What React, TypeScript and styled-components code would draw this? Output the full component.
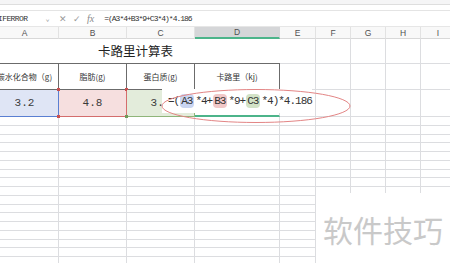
import React from 'react';
import styled, { createGlobalStyle } from 'styled-components';

const GlobalStyle = createGlobalStyle`
  html, body {
    margin: 0;
    padding: 0;
    background: #ffffff;
    overflow: hidden;
  }
  body {
    width: 450px;
    height: 263px;
    font-family: 'Liberation Sans', Arial, sans-serif;
  }
`;

const GRID = '#dcdde0';
const DARK = '#6b6b6b';

const Page = styled.div`
  position: relative;
  width: 450px;
  height: 263px;
  overflow: hidden;
  background: #fff;
`;

const Toolbar = styled.div`
  height: 4px;
  background: #f5f5f6;
  border-bottom: 1px solid #dedede;
`;

const ToolbarGap = styled.div`
  height: 5px;
  border-bottom: 1px solid #e4e4e4;
`;

const FormulaBar = styled.div`
  display: flex;
  align-items: center;
  height: 15px;
  border-bottom: 1px solid #e6e6e6;
`;

const NameBox = styled.div`
  display: flex;
  align-items: center;
  justify-content: space-between;
  width: 56px;
  height: 100%;
  padding: 0 5px 0 0;
  margin-left: -2px;
  box-sizing: border-box;
  font-family: 'Liberation Mono', monospace;
  font-size: 8px;
  letter-spacing: -0.6px;
  color: #333;
`;

const Caret = styled.span`
  font-size: 7px;
  color: #999;
`;

const BarIcons = styled.div`
  display: flex;
  align-items: center;
  gap: 6px;
  padding: 0 6px 0 5px;
  color: #9a9a9a;
  font-size: 9px;
`;

const Fx = styled.span`
  font-family: 'Liberation Serif', serif;
  font-style: italic;
  font-size: 10px;
  color: #8a8a8a;
`;

const FormulaInput = styled.div`
  flex: 1;
  padding-left: 4px;
  font-family: 'Liberation Mono', monospace;
  font-size: 8px;
  letter-spacing: -1px;
  color: #333;
  white-space: nowrap;
`;

const Sheet = styled.div`
  display: grid;
  margin-left: -9px;
  grid-template-columns: 68px 68px 68px 85px 36px 35px 35px 35px 35px;
  grid-template-rows: 12px 25px 26px 27px repeat(17, 8.75px);
`;

const ColHead = styled.div<{ $active?: boolean }>`
  display: flex;
  align-items: center;
  justify-content: center;
  box-sizing: border-box;
  font-size: 8.5px;
  color: #505050;
  background: ${(p) => (p.$active ? '#d5d6d8' : '#f8f8f8')};
  border-right: 1px solid ${(p) => (p.$active ? '#d5d6d8' : '#e2e2e2')};
  border-bottom: ${(p) => (p.$active ? '2px solid #4cb48a' : '1px solid #d8d8d8')};
`;

const Cell = styled.div`
  box-sizing: border-box;
  border-right: 1px solid ${GRID};
  border-bottom: 1px solid ${GRID};
`;

const TitleCell = styled.div`
  grid-column: span 4;
  display: flex;
  align-items: center;
  justify-content: center;
  padding-bottom: 1px;
  box-sizing: border-box;
  border-bottom: 1px solid ${DARK};
  font-family: 'Noto Sans CJK SC', sans-serif;
  font-size: 12.5px;
  color: #222;
`;

const LabelCell = styled.div`
  display: flex;
  align-items: center;
  justify-content: center;
  box-sizing: border-box;
  border-right: 1px solid ${DARK};
  border-bottom: 1px solid ${DARK};
  font-family: 'Noto Sans CJK SC', sans-serif;
  font-size: 8px;
  color: #333;
  white-space: nowrap;
`;

const RefCell = styled.div<{ $bg: string; $line: string }>`
  position: relative;
  display: flex;
  align-items: center;
  justify-content: center;
  box-sizing: border-box;
  background: ${(p) => p.$bg};
  border-right: 1px solid ${(p) => p.$line};
  border-bottom: 1px solid ${(p) => p.$line};
  font-family: 'Liberation Mono', monospace;
  font-size: 11px;
  letter-spacing: 0px;
  color: #3a3a3a;
`;

const Corner = styled.span<{ $color: string; $pos: 'tl' | 'tr' | 'bl' | 'br' }>`
  position: absolute;
  width: 3px;
  height: 3px;
  background: ${(p) => p.$color};
  ${(p) => (p.$pos[0] === 't' ? 'top: -2px;' : 'bottom: -2px;')}
  ${(p) => (p.$pos[1] === 'l' ? 'left: -2px;' : 'right: -2px;')}
`;

const ActiveCell = styled.div`
  box-sizing: border-box;
  border-right: 1px solid ${GRID};
  border-bottom: 2px solid #4cb48a;
`;

const Editor = styled.div`
  position: absolute;
  left: 162px;
  top: 89px;
  width: 150px;
  height: 24px;
  display: flex;
  align-items: center;
  padding-left: 6px;
  box-sizing: border-box;
  background: #fff;
  font-family: 'Liberation Mono', monospace;
  font-size: 11px;
  letter-spacing: -1px;
  color: #333;
  white-space: pre;
`;

const Ref = styled.span<{ $bg: string }>`
  background: ${(p) => p.$bg};
  border-radius: 4px;
  padding: 1px 2px 1px 1px;
  margin: 0 1px;
`;

const Ellipse = styled.svg`
  position: absolute;
  left: 160px;
  top: 88px;
`;

const Watermark = styled.div`
  position: absolute;
  left: 316px;
  top: 193px;
  width: 134px;
  height: 70px;
  display: flex;
  align-items: center;
  justify-content: center;
  padding-top: 2px;
  box-sizing: border-box;
  background: #fff;
  font-family: 'Noto Sans CJK SC', sans-serif;
  font-size: 30px;
  color: #c9c9c9;
`;

const columns = ['A', 'B', 'C', 'D', 'E', 'F', 'G', 'H', 'I'];

export default function App() {
  const bottomRows = Array.from({ length: 17 });

  return (
    <>
      <GlobalStyle />
      <Page>
        <Toolbar />
        <ToolbarGap />
        <FormulaBar>
          <NameBox>
            <span>IFERROR</span>
            <Caret>⌄</Caret>
          </NameBox>
          <BarIcons>
            <span>✕</span>
            <span>✓</span>
            <Fx>fx</Fx>
          </BarIcons>
          <FormulaInput>=(A3*4+B3*9+C3*4)*4.186</FormulaInput>
        </FormulaBar>

        <Sheet>
          {columns.map((c) => (
            <ColHead key={c} $active={c === 'D'}>
              {c}
            </ColHead>
          ))}

          <TitleCell>卡路里计算表</TitleCell>
          {columns.slice(4).map((c) => (
            <Cell key={'r1' + c} />
          ))}

          <LabelCell>碳水化合物（g)</LabelCell>
          <LabelCell>脂肪(g)</LabelCell>
          <LabelCell>蛋白质(g)</LabelCell>
          <LabelCell>卡路里（kj)</LabelCell>
          {columns.slice(4).map((c) => (
            <Cell key={'r2' + c} />
          ))}

          <RefCell $bg="#dfe5f5" $line="#5a7fd2">
            3.2
          </RefCell>
          <RefCell $bg="#f6dfdf" $line="#d46d6d">
            4.8
            <Corner $color="#c95050" $pos="tl" />
            <Corner $color="#c95050" $pos="tr" />
            <Corner $color="#c95050" $pos="bl" />
            <Corner $color="#c95050" $pos="br" />
          </RefCell>
          <RefCell $bg="#e3ecdb" $line="#8fb57a">
            3.2
            <Corner $color="#6f9a5a" $pos="bl" />
          </RefCell>
          <ActiveCell />
          {columns.slice(4).map((c) => (
            <Cell key={'r3' + c} />
          ))}

          {bottomRows.map((_, r) =>
            columns.map((c) => <Cell key={'b' + r + c} />),
          )}
        </Sheet>

        <Editor>
          =(<Ref $bg="#c9d5f1">A3</Ref>*4+<Ref $bg="#f1c8c8">B3</Ref>*9+<Ref $bg="#d2e2c6">C3</Ref>*4)*4.186
        </Editor>

        <Ellipse width="200" height="40" viewBox="0 0 200 40">
          <ellipse cx="96" cy="18" rx="94" ry="16.5" fill="none" stroke="#e38585" strokeWidth="1" />
        </Ellipse>

        <Watermark>软件技巧</Watermark>
      </Page>
    </>
  );
}
